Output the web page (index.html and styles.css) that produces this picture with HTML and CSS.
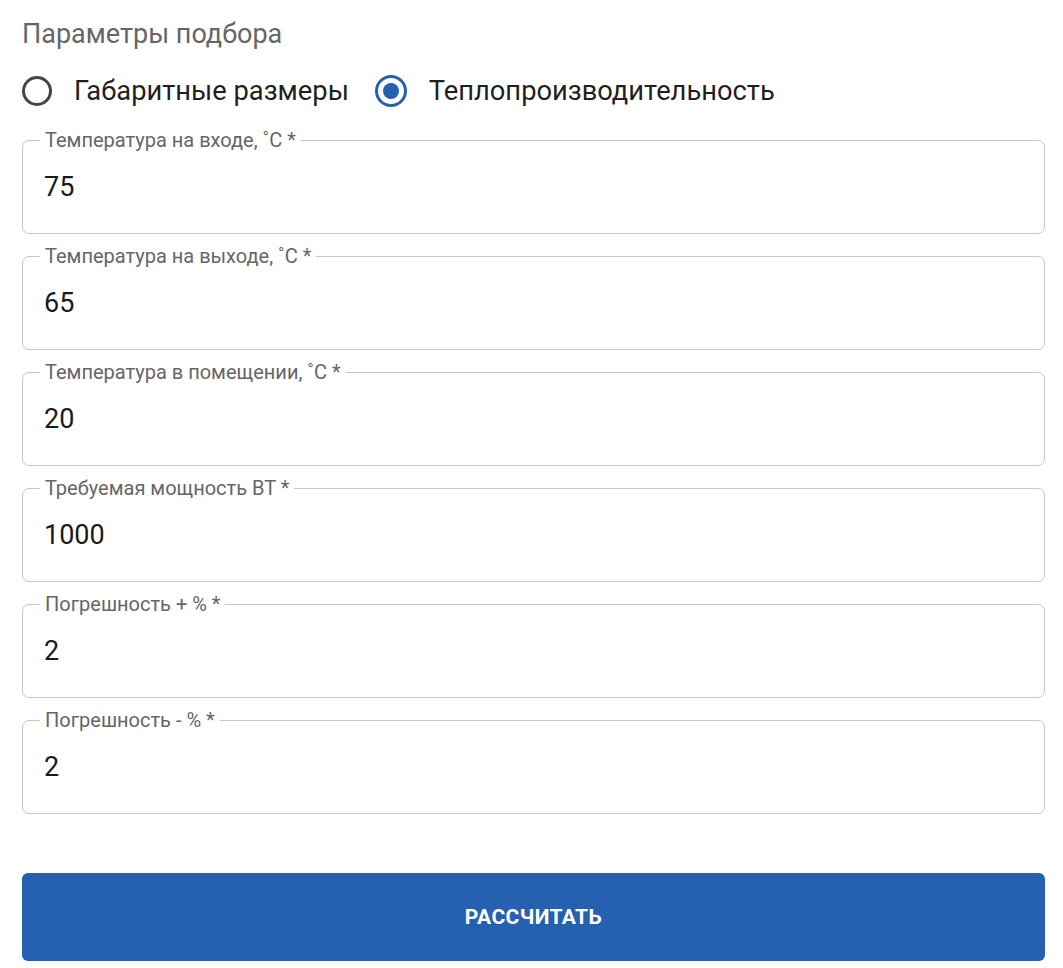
FILE: index.html
```html
<!DOCTYPE html>
<html lang="ru">
<head>
    <meta charset="UTF-8">
    <meta name="viewport" content="width=device-width, initial-scale=1.0">
    <title>Параметры подбора</title>
    <link rel="stylesheet" href="styles.css">
</head>
<body>
    <div class="container">
        <div class="title">Параметры подбора</div>

        <!-- Mode switch -->
        <div class="radio-row">
            <label class="radio">
                <span class="radio-circle"></span>
                <span class="radio-text">Габаритные размеры</span>
            </label>
            <label class="radio checked">
                <span class="radio-circle"></span>
                <span class="radio-text">Теплопроизводительность</span>
            </label>
        </div>

        <fieldset class="field">
            <legend>Температура на входе, ˚С *</legend>
            <div class="value">75</div>
        </fieldset>

        <fieldset class="field">
            <legend>Температура на выходе, ˚С *</legend>
            <div class="value">65</div>
        </fieldset>

        <fieldset class="field">
            <legend>Температура в помещении, ˚С *</legend>
            <div class="value">20</div>
        </fieldset>

        <fieldset class="field">
            <legend>Требуемая мощность ВТ *</legend>
            <div class="value">1000</div>
        </fieldset>

        <fieldset class="field">
            <legend>Погрешность + % *</legend>
            <div class="value">2</div>
        </fieldset>

        <fieldset class="field">
            <legend>Погрешность - % *</legend>
            <div class="value">2</div>
        </fieldset>

        <button class="submit">Рассчитать</button>
    </div>
</body>
</html>
```

FILE: styles.css
```css
* {
    margin: 0;
    padding: 0;
    box-sizing: border-box;
    font-family: 'Roboto', 'Liberation Sans', sans-serif;
}

body {
    background: #ffffff;
    color: #1f1f1f;
}

.container {
    width: 1063px;
    padding: 17px 18px 0 22px;
}

.title {
    font-size: 27px;
    line-height: 34px;
    color: #666666;
}

.radio-row {
    display: flex;
    align-items: center;
    gap: 26px;
    margin-top: 24px;
    height: 32px;
}

.radio {
    display: flex;
    align-items: center;
    gap: 22px;
}

.radio-circle {
    width: 30px;
    height: 30px;
    border: 3px solid #454545;
    border-radius: 50%;
    display: flex;
    align-items: center;
    justify-content: center;
}

.radio.checked .radio-circle {
    width: 32px;
    height: 32px;
    border-color: #2561b0;
}

.radio.checked .radio-circle::after {
    content: '';
    width: 16px;
    height: 16px;
    border-radius: 50%;
    background: #2561b0;
}

.radio-text {
    font-size: 27.3px;
    line-height: 32px;
    color: #1f1f1f;
}

.field {
    border: 1.5px solid #c6c6c6;
    border-radius: 7px;
    height: 103px;
    margin-top: 13px;
    padding: 0 21px;
}

.radio-row + .field {
    margin-top: 24px;
}

legend {
    font-size: 20px;
    line-height: 18px;
    color: #666666;
    padding: 0 5px;
    margin-left: -4px;
}

.value {
    font-size: 27px;
    line-height: 32px;
    margin-top: 22px;
    color: #1a1a1a;
}

.submit {
    display: block;
    width: 100%;
    height: 88px;
    margin-top: 59px;
    border: none;
    border-radius: 6px;
    background: #2561b0;
    color: #ffffff;
    font-size: 21px;
    font-weight: bold;
    text-transform: uppercase;
    letter-spacing: 0.4px;
}
```
